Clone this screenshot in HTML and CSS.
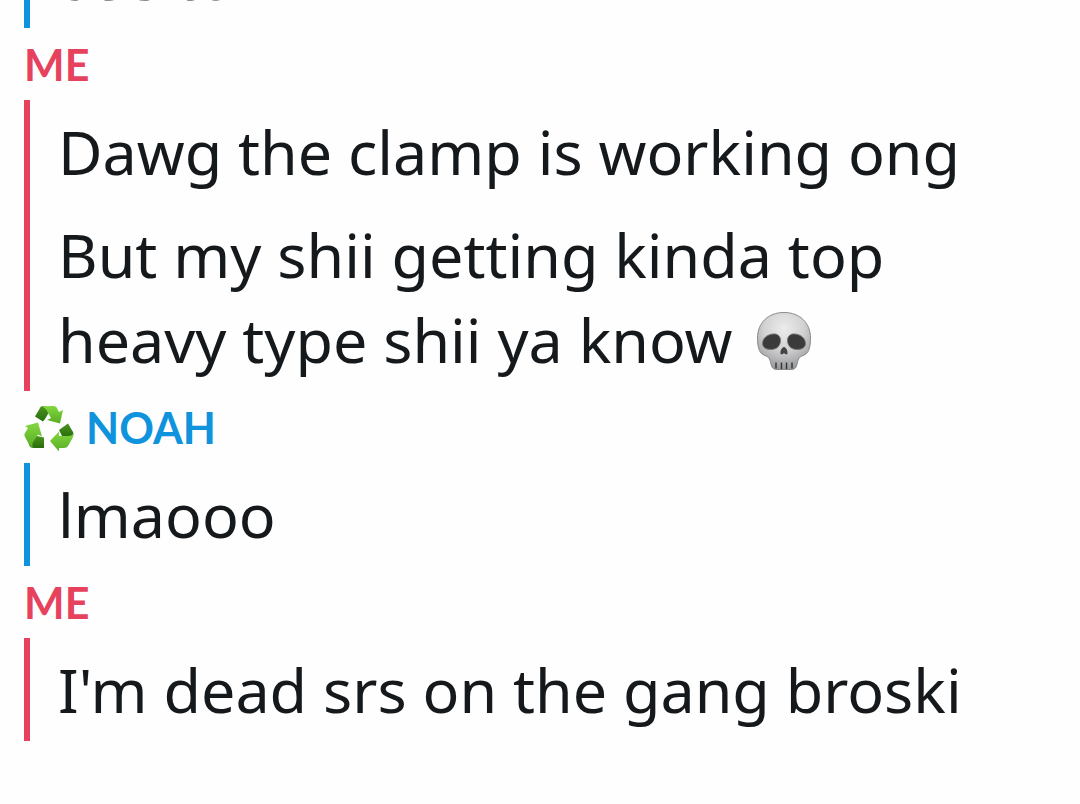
FILE: index.html
```
<!DOCTYPE html>
<html lang="en">
<head>
    <meta charset="UTF-8">
    <meta name="viewport" content="width=device-width, initial-scale=1.0">
    <link rel="stylesheet" href="styles.css">
    <title>Chat</title>
</head>
<body>
    <main class="chat">
        <section class="group friend">
            <div class="messages">
                <p>use to</p>
            </div>
        </section>

        <section class="group me">
            <h2 class="sender">ME</h2>
            <div class="messages">
                <p>Dawg the clamp is working ong</p>
                <p>But my shii getting kinda top heavy type shii ya know
                    <svg class="skull" viewBox="0 0 56 60" role="img" aria-label="skull">
                        <defs>
                            <radialGradient id="bone" cx="50%" cy="28%" r="75%">
                                <stop offset="0" stop-color="#ececec"/>
                                <stop offset="0.5" stop-color="#d2d2d3"/>
                                <stop offset="1" stop-color="#929395"/>
                            </radialGradient>
                        </defs>
                        <path fill="url(#bone)" stroke="#8a8b8d" stroke-width="1" d="M28 1.500C12 1.500 1.500 12 1.500 27c0 7 1 12 3.500 15 2 2.500 6 2.500 8 5 1.500 2.500 1.500 6 3 9 1 2 3 2.500 5 2.500h14c2 0 4-.5 5-2.500 1.500-3 1.500-6.500 3-9 2-2.500 6-2.500 8-5 2.500-3 3.500-8 3.500-15C54.500 12 44 1.500 28 1.500z"/>
                        <path fill="#3a3a3b" stroke="#777" stroke-width="1" d="M17 23c4.500-.5 7.500 2 7.500 6.500 0 5-3.500 9-9.500 9-5 0-8.500-2-8.500-6 0-5 4.500-9 10.500-9.500zM39 23c-4.500-.5-7.500 2-7.500 6.500 0 5 3.500 9 9.500 9 5 0 8.500-2 8.500-6 0-5-4.500-9-10.500-9.500z"/>
                        <path fill="#444" d="M28 36c-2 0-4 4-3.500 6.500.5 1.500 2.500 1 3.500-.5 1 1.500 3 2 3.500.5C32 40 30 36 28 36z"/>
                        <path stroke="#333" stroke-width="1.400" d="M20 51.500v6M25.500 51.500v6.500M30.500 51.500v6.500M36 51.500v6"/>
                    </svg>
                </p>
            </div>
        </section>

        <section class="group friend">
            <h2 class="sender">
                <svg class="recycle" viewBox="0 0 50 46" role="img" aria-label="recycle">
                    <defs>
                        <linearGradient id="leaf" x1="0" y1="0" x2="0" y2="1">
                            <stop offset="0" stop-color="#83d740"/>
                            <stop offset="1" stop-color="#57ae24"/>
                        </linearGradient>
                        <linearGradient id="fold" x1="0" y1="0" x2="0" y2="1">
                            <stop offset="0" stop-color="#4a9420"/>
                            <stop offset="1" stop-color="#286d0b"/>
                        </linearGradient>
                    </defs>
                    <path fill="url(#fold)" d="M11 11.500 16 3c1-2 2-2 4-2l7 3-6 10-2 2.500z"/>
                    <path fill="url(#leaf)" d="M17 1.200 29 1c2 0 3 .5 4 2l2 4 4-2-3 13.500L23 15l4-2-4-7c-1-2-3-4-6-4.800z"/>
                    <path fill="url(#fold)" d="m8 34 5-3 7 1.500V43H10c-3 0-4-1-5-3z"/>
                    <path fill="url(#leaf)" d="m1 21 13-3.500 4 14-4-2-4 6c-2 3-2 5-1 7-2 0-3-1-4-3L1 32c-1-2-.5-3 0-4l3-5z"/>
                    <path fill="url(#fold)" d="m35 25 9-6.500 5 8.500c.5 1 .5 3 0 4l-3 1-8-1z"/>
                    <path fill="url(#leaf)" d="m26 36 9-9.500v4.500h9c3 0 4-1 5-2 .5 2 0 3-1 5l-4 7c-1 1-2 2-4 2h-5v3.500z"/>
                </svg>
                NOAH
            </h2>
            <div class="messages">
                <p>lmaooo</p>
            </div>
        </section>

        <section class="group me">
            <h2 class="sender">ME</h2>
            <div class="messages">
                <p>I'm dead srs on the gang broski</p>
            </div>
        </section>
    </main>
</body>
</html>
```
FILE: styles.css
```
html, body {
    margin: 0;
    padding: 0;
    background-color: #fefefe;
    color: #16191c;
    font-family: "Noto Sans", "Liberation Sans", sans-serif;
}

body {
    overflow: hidden;
}

/* scrolled to the latest message, the oldest one is cut off at the top */
.chat {
    margin-top: -75px;
    padding: 0 24px;
}

.me {
    --accent: #e6425e;
}

.friend {
    --accent: #0f93dc;
}

.sender {
    display: flex;
    align-items: center;
    gap: 12px;
    margin: 0;
    padding-top: 2px;
    color: var(--accent);
    font-family: Lato, "Liberation Sans", sans-serif;
    font-size: 43px;
    font-weight: bold;
    line-height: 70px;
}

.messages {
    border-left: 6px solid var(--accent);
    padding: 0 34px 0 28px;
}

.messages p {
    margin: 0;
    padding: 9px 0;
    font-size: 61px;
    line-height: 85px;
}

.skull {
    width: 56px;
    height: 60px;
    margin-left: 8px;
    vertical-align: -8px;
}

.recycle {
    width: 50px;
    height: 46px;
}
```
